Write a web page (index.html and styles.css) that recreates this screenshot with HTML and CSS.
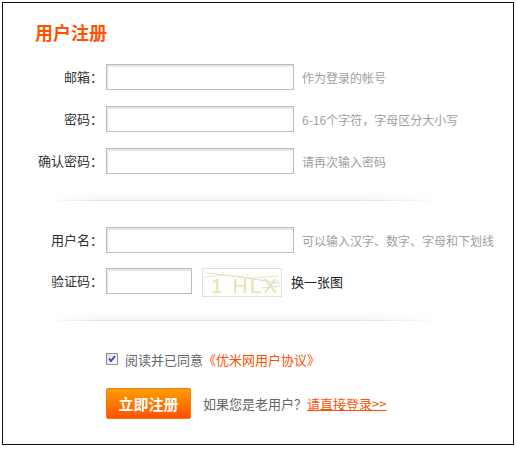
FILE: index.html
```html
<!DOCTYPE html>
<html lang="zh-CN">
<head>
<meta charset="utf-8">
<title>用户注册</title>
<link rel="stylesheet" href="styles.css">
</head>
<body>
<div class="box">
  <h1 class="title">用户注册</h1>
  <div class="row">
    <label class="label">邮箱：</label>
    <input class="field" type="text">
    <span class="hint">作为登录的帐号</span>
  </div>
  <div class="row">
    <label class="label">密码：</label>
    <input class="field" type="password">
    <span class="hint">6-16个字符，字母区分大小写</span>
  </div>
  <div class="row">
    <label class="label">确认密码：</label>
    <input class="field" type="password">
    <span class="hint">请再次输入密码</span>
  </div>
  <div class="divider"></div>
  <div class="row row-first">
    <label class="label">用户名：</label>
    <input class="field" type="text">
    <span class="hint">可以输入汉字、数字、字母和下划线</span>
  </div>
  <div class="row">
    <label class="label">验证码：</label>
    <input class="field field-short" type="text">
    <svg class="captcha" width="80" height="29" viewBox="0 0 80 29">
      <rect x="0.5" y="0.5" width="79" height="28" fill="#fffffb" stroke="#e2e2e2"/>
      <path d="M4 5 L30 8 L58 12 L78 15" stroke="#e6d2ec" stroke-width="1" fill="none"/>
      <path d="M2 9 L26 7 L50 10 L76 8" stroke="#efe6c8" stroke-width="1" fill="none"/>
      <path d="M60 20 L78 18" stroke="#e6d2ec" stroke-width="1" fill="none"/>
      <text x="9" y="25" font-family="Liberation Sans, sans-serif" font-size="21" fill="#e5e1b6" letter-spacing="2">1 HLX</text>
      <g fill="#ebe6c4">
        <rect x="6" y="13" width="1" height="1"/><rect x="21" y="4" width="1" height="1"/>
        <rect x="36" y="25" width="1" height="1"/><rect x="45" y="6" width="1" height="1"/>
        <rect x="66" y="5" width="1" height="1"/><rect x="72" y="24" width="1" height="1"/>
        <rect x="13" y="26" width="1" height="1"/><rect x="55" y="26" width="1" height="1"/>
        <rect x="30" y="15" width="1" height="1"/><rect x="75" y="12" width="1" height="1"/>
      </g>
    </svg>
    <a class="refresh">换一张图</a>
  </div>
  <div class="divider"></div>
  <div class="agree">
    <svg class="check" width="12" height="12" viewBox="0 0 12 12">
      <defs>
        <linearGradient id="cb" x1="0" y1="0" x2="1" y2="1">
          <stop offset="0" stop-color="#dcdcdc"/>
          <stop offset="1" stop-color="#ffffff"/>
        </linearGradient>
      </defs>
      <rect x="0.5" y="0.5" width="11" height="11" fill="url(#cb)" stroke="#8e8f8f"/>
      <path d="M3 5.5 L5 8 L9 3" stroke="#2a47a8" stroke-width="1.8" fill="none"/>
    </svg>
    <span class="agree-text">阅读并已同意</span><a class="agree-link">《优米网用户协议》</a>
  </div>
  <div class="actions">
    <button class="submit" type="button">立即注册</button>
    <span class="old">如果您是老用户？</span><a class="login">请直接登录&gt;&gt;</a>
  </div>
</div>
</body>
</html>
```

FILE: styles.css
```css
html, body {
  margin: 0;
  padding: 0;
  background: #fff;
}

body {
  font-family: "Noto Sans CJK SC", "Liberation Sans", sans-serif;
  font-size: 13px;
  color: #333;
}

.box {
  box-sizing: border-box;
  width: 512px;
  height: 443px;
  margin: 2px 0 0 2px;
  border: 1px solid #111;
  padding-top: 19px;
}

.title {
  margin: 0 0 22px 32px;
  height: 20px;
  line-height: 20px;
  font-size: 18px;
  font-weight: bold;
  color: #ff5200;
}

.row {
  display: flex;
  align-items: center;
  height: 26px;
  margin-bottom: 16px;
}

.row-first {
  margin-top: 26px;
  margin-bottom: 15px;
}

.label {
  width: 100px;
  text-align: right;
  line-height: 26px;
  color: #333;
  font-size: 13px;
}

.field {
  box-sizing: border-box;
  width: 188px;
  height: 26px;
  margin: 0 0 0 3px;
  padding: 0 4px;
  border: 1px solid #bdbdbd;
  box-shadow: inset 1px 2px 0 #e6e6e6;
  background: #fff;
  outline: none;
  font-family: inherit;
  font-size: 13px;
}

.field-short {
  width: 86px;
}

.hint {
  margin-left: 8px;
  font-size: 12px;
  color: #a0a0a0;
}

.captcha {
  display: block;
  align-self: flex-start;
  margin-left: 10px;
}

.refresh {
  margin-left: 9px;
  color: #222;
  font-size: 13px;
  cursor: pointer;
}

.divider {
  width: 392px;
  height: 10px;
  margin-left: 47px;
  background: linear-gradient(to bottom, rgba(245, 245, 245, 0), #f4f4f4);
  border-bottom: 1px solid #e2e2e2;
  -webkit-mask-image: linear-gradient(to right, transparent, #000 12%, #000 80%, transparent);
  mask-image: linear-gradient(to right, transparent, #000 12%, #000 80%, transparent);
}

.agree {
  display: flex;
  align-items: center;
  height: 20px;
  margin: 28px 0 0 103px;
  font-size: 13px;
}

.check {
  display: block;
  margin-right: 7px;
}

.agree-text {
  color: #666;
}

.agree-link {
  color: #ff5000;
  cursor: pointer;
}

.actions {
  display: flex;
  align-items: center;
  margin: 19px 0 0 103px;
  font-size: 13px;
}

.submit {
  box-sizing: border-box;
  width: 85px;
  height: 31px;
  padding: 0;
  border: 1px solid #f07a10;
  border-radius: 2px;
  background: linear-gradient(to bottom, #ff9e00, #ff5200);
  color: #fff;
  font-family: inherit;
  font-size: 15px;
  font-weight: bold;
  cursor: pointer;
}

.old {
  margin-left: 12px;
  color: #666;
}

.login {
  color: #ff5000;
  text-decoration: underline;
  cursor: pointer;
}
```
